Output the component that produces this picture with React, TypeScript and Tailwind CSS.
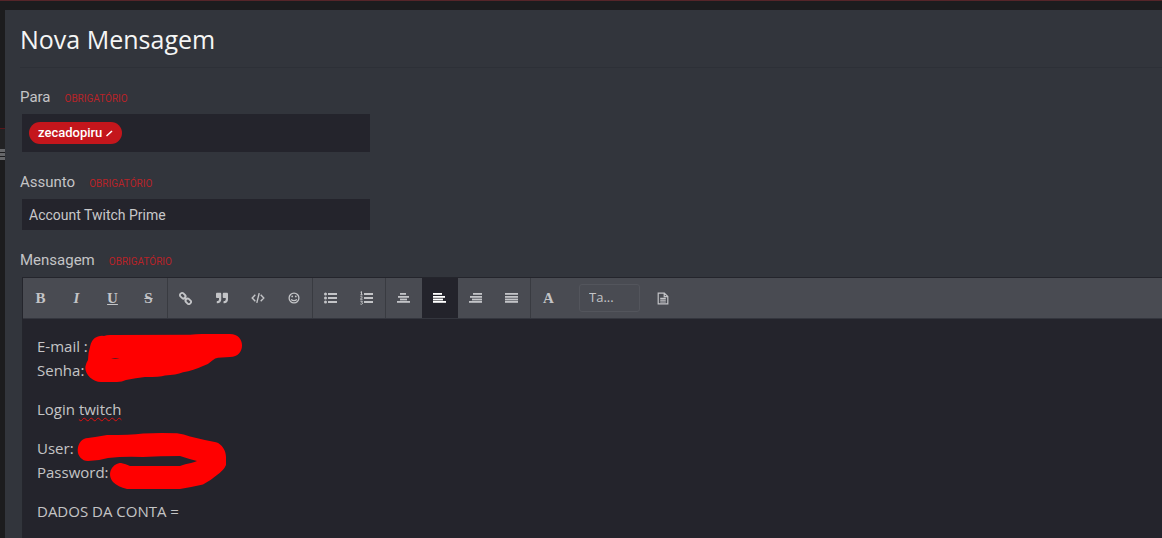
import { clsx } from "clsx"
import { useState } from "react"
import type { ReactNode } from "react"
import { FaQuoteRight } from "react-icons/fa"

type Tool = {
  id: string
  label: string
  icon: ReactNode
}

function Letter({ className, children }: { className?: string; children: ReactNode }) {
  return (
    <span className={clsx("font-['Liberation_Serif',serif] text-[15px] leading-5 font-bold", className)}>
      {children}
    </span>
  )
}

// Each row is [x, width], drawn from top to bottom
function Rows({ rows }: { rows: number[][] }) {
  return (
    <svg width="13" height="12" viewBox="0 0 13 12" fill="currentColor" aria-hidden="true">
      {rows.map(([x, width], index) => (
        <rect key={index} x={x} y={[1, 4, 6.6, 9][index]} width={width} height="1.800" />
      ))}
    </svg>
  )
}

function BulletList() {
  return (
    <svg width="13" height="12" viewBox="0 0 13 12" fill="currentColor" aria-hidden="true">
      {[1, 5, 9].map((y) => (
        <g key={y}>
          <circle cx="1.5" cy={y + 1} r="1.5" />
          <rect x="4" y={y} width="9" height="2" />
        </g>
      ))}
    </svg>
  )
}

function NumberList() {
  return (
    <svg width="13" height="14" viewBox="0 0 13 14" fill="currentColor" aria-hidden="true">
      {[2, 6, 10].map((y) => (
        <rect key={y} x="4" y={y} width="9" height="2" />
      ))}
      <path
        d="M0.5 1.2 1.5.6V3.8M.4 3.8h2.2M.4 5.8c.8-.8 2-.4 1.8.4S.5 7.5.4 8.2h2.2M.4 10.2h2L1.5 11.3c1.6.1 1.3 2-.1 2-.5 0-.8-.1-1.1-.4"
        fill="none"
        stroke="currentColor"
        strokeWidth="1"
      />
    </svg>
  )
}

function LinkIcon() {
  return (
    <svg width="13" height="13" viewBox="0 0 13 13" fill="none" stroke="currentColor" strokeWidth="1.800" aria-hidden="true">
      <g transform="rotate(45 6.5 6.5)">
        <rect x="-.3" y="4.400" width="6" height="4.200" rx="1.700" />
        <rect x="7.300" y="4.400" width="6" height="4.200" rx="1.700" />
        <path d="M4.300 6.500H8.700" />
      </g>
    </svg>
  )
}

function CodeIcon() {
  return (
    <svg width="14" height="12" viewBox="0 0 14 12" fill="none" stroke="currentColor" strokeWidth="1.400" aria-hidden="true">
      <path d="M4.300 2.700 1.200 6 4.300 9.300M9.700 2.700 12.800 6 9.700 9.300M8.200 1.200 5.800 10.800" />
    </svg>
  )
}

function SmileIcon() {
  return (
    <svg width="12" height="12" viewBox="0 0 12 12" fill="none" stroke="currentColor" strokeWidth="1.300" aria-hidden="true">
      <circle cx="6" cy="6" r="4.900" />
      <path d="M3.300 7.200C4.200 9.200 7.800 9.200 8.700 7.200" />
      <circle cx="4.200" cy="4.400" r=".9" fill="currentColor" stroke="none" />
      <circle cx="7.800" cy="4.400" r=".9" fill="currentColor" stroke="none" />
    </svg>
  )
}

function FileIcon() {
  return (
    <svg width="12" height="13" viewBox="0 0 12 13" fill="none" stroke="currentColor" strokeWidth="1.200" aria-hidden="true">
      <path d="M1.200 1.100H7.300L10.800 4.600V11.900H1.200ZM7.200 1.100V4.700H10.800M3.200 6.400H8.800M3.200 8.200H8.800M3.200 10H8.800" />
    </svg>
  )
}

const groups: Tool[][] = [
  [
    { id: "bold", label: "Negrito", icon: <Letter>B</Letter> },
    { id: "italic", label: "Itálico", icon: <Letter className="italic">I</Letter> },
    { id: "underline", label: "Sublinhado", icon: <Letter className="underline">U</Letter> },
    { id: "strike", label: "Tachado", icon: <Letter className="px-px line-through">S</Letter> },
  ],
  [
    { id: "link", label: "Link", icon: <LinkIcon /> },
    { id: "quote", label: "Citação", icon: <FaQuoteRight size={12} /> },
    { id: "code", label: "Código", icon: <CodeIcon /> },
    { id: "emoji", label: "Emoticon", icon: <SmileIcon /> },
  ],
  [
    { id: "bullets", label: "Lista", icon: <BulletList /> },
    { id: "numbers", label: "Lista numerada", icon: <NumberList /> },
  ],
  [
    { id: "center", label: "Centralizar", icon: <Rows rows={[[3, 6], [1, 11], [3, 7], [0, 13]]} /> },
    { id: "left", label: "Alinhar à esquerda", icon: <Rows rows={[[0, 9], [0, 12], [0, 10], [0, 13]]} /> },
    { id: "right", label: "Alinhar à direita", icon: <Rows rows={[[4, 9], [1, 12], [3, 10], [0, 13]]} /> },
    { id: "justify", label: "Justificar", icon: <Rows rows={[[0, 13], [0, 13], [0, 13], [0, 13]]} /> },
  ],
]

function ToolButton({ tool, active, onClick }: { tool: Tool; active?: boolean; onClick?: () => void }) {
  return (
    <button
      type="button"
      aria-label={tool.label}
      aria-pressed={active}
      onClick={onClick}
      className={clsx(
        "flex h-10 w-9 items-center justify-center pr-px",
        active ? "bg-[#23232b] text-white" : "text-[#c3c4c7]",
      )}
    >
      {tool.icon}
    </button>
  )
}

function FieldLabel({ id, htmlFor, children }: { id?: string; htmlFor?: string; children: ReactNode }) {
  return (
    <label id={id} htmlFor={htmlFor} className="flex items-baseline gap-3.5 text-[15px] leading-5 text-[#c4c4c6]">
      {children}
      <span className="text-[10px] text-[#b82328] uppercase">Obrigatório</span>
    </label>
  )
}

function Scribbles() {
  return (
    <svg
      className="pointer-events-none absolute top-0 left-0"
      width="240"
      height="219"
      viewBox="23 319 240 219"
      fill="#ff0000"
      aria-hidden="true"
    >
      <path d="M90 347C91 342 93 338 98 336.500Q101 335.500 104 336Q107 334.700 112 335L190 334.700Q196 334 202 334H230C246 334 246 357 230 357L218 357.700Q215 358 213 360Q209 364 203 366C197 369 190 371 183 372.300Q176 375 165 375.500Q160 377 145 377Q136 378 126 380Q122 382 117 382H101C93 382 85 375 85.300 367Q86 363 88 360Q88 353 90 347Z" />
      <path d="M111 358.800Q115 357 119.500 358.800Z" fill="#24242c" />
      <path d="M77.700 450C78 443 82 438 88 438Q96 437 107 435Q130 435 143 433.500Q160 432.500 177 433.300Q184 434 190 436.500Q204 440 216 442.300C222 444 226 451 226 457V465Q224 470 217 475Q210 481 203 484.500Q192 487 180 489H127Q118 487 113 482C106 473 113 463 121 463Q126 464 130 466H180Q185 464 191 463Q195 462 197 461Q189 459 180 456Q160 456 143 457Q125 456 108 458Q98 461 88 461C82 461 77.500 456 77.700 450Z" />
    </svg>
  )
}

export default function App() {
  const [subject, setSubject] = useState("Account Twitch Prime")
  const [align, setAlign] = useState("left")

  return (
    <div className="flex min-h-screen flex-col border-t border-[#552529] bg-[#1c1c1e] pt-[9px] font-[Roboto,sans-serif]">
      <div className="flex grow">
        <div className="w-[5px] shrink-0 pt-[118px]">
          <div className="h-[21px] border-t border-[#5a171b] bg-[#222224]" />
          <div className="flex flex-col gap-px">
            <div className="h-[3px] bg-[#66676a]" />
            <div className="h-[3px] bg-[#66676a]" />
            <div className="h-[3px] bg-[#66676a]" />
          </div>
        </div>

        <main className="flex min-w-0 grow flex-col bg-[#32353c] pl-[15px]">
          <h1 className="border-b border-[#2d3037] pt-[11px] pb-2.5 font-['Open_Sans',sans-serif] text-[25px] leading-9 text-[#f5f5f5]">
            Nova Mensagem
          </h1>

          <form className="flex grow flex-col pt-[19px]" onSubmit={(event) => event.preventDefault()}>
            <FieldLabel htmlFor="to">Para</FieldLabel>
            <div className="mt-[5px] ml-0.5 flex h-[38px] w-[348px] max-w-full items-center bg-[#24242c] px-[7px]">
              <span className="flex h-[22px] shrink-0 items-center gap-1 rounded-full bg-[#c4161c] px-[9px] text-[13px] font-medium text-white">
                zecadopiru
                <button type="button" aria-label="Remover zecadopiru">
                  <svg width="7" height="7" viewBox="0 0 7 7" stroke="currentColor" strokeWidth="1.500">
                    <path d="M.5 6 6 1" />
                  </svg>
                </button>
              </span>
              <input id="to" type="text" className="min-w-0 grow bg-transparent px-2 text-sm text-[#c4c4c6] outline-none" />
            </div>

            <div className="pt-5">
              <FieldLabel htmlFor="subject">Assunto</FieldLabel>
              <input
                id="subject"
                type="text"
                value={subject}
                onChange={(event) => setSubject(event.target.value)}
                className="mt-[5px] ml-0.5 block h-[31px] w-[348px] max-w-full bg-[#24242c] px-[7px] text-sm text-[#c8c8ca] outline-none"
              />
            </div>

            <div className="flex grow flex-col pt-5">
              <FieldLabel id="message-label">Mensagem</FieldLabel>

              <div className="mt-[5px] ml-0.5 flex grow flex-col border-t border-l border-[#24252c]">
                <div role="toolbar" className="flex border-b border-[#34363e] bg-[#494b52]">
                  {groups.map((group) => (
                    <div key={group[0].id} className="flex border-r border-[#393b41]">
                      {group.map((tool) => (
                        <ToolButton
                          key={tool.id}
                          tool={tool}
                          active={tool.id === align}
                          onClick={group === groups[3] ? () => setAlign(tool.id) : undefined}
                        />
                      ))}
                    </div>
                  ))}
                  <div className="flex items-center gap-3">
                    <ToolButton tool={{ id: "color", label: "Cor do texto", icon: <Letter>A</Letter> }} />
                    <select
                      aria-label="Tamanho"
                      className="h-7 w-[61px] appearance-none rounded-[3px] border border-[#53555c] bg-transparent px-[9px] font-['Open_Sans',sans-serif] text-[13px] text-[#c3c4c7]"
                    >
                      <option>Ta...</option>
                    </select>
                  </div>
                  <div className="pl-[5px]">
                    <ToolButton tool={{ id: "source", label: "Código-fonte", icon: <FileIcon /> }} />
                  </div>
                </div>

                <div className="relative grow bg-[#24242c]">
                  <div
                    role="textbox"
                    aria-multiline="true"
                    aria-labelledby="message-label"
                    contentEditable
                    suppressContentEditableWarning
                    spellCheck={false}
                    className="flex flex-col gap-[15px] px-[14px] pt-[15px] pb-3.5 font-['Open_Sans',sans-serif] text-[15px] leading-6 text-[#c4c4c6] outline-none"
                  >
                    <p>
                      E-mail :
                      <br />
                      Senha:
                    </p>
                    <p>
                      Login{" "}
                      <span className="underline decoration-[#e01010] decoration-wavy decoration-1 underline-offset-2">
                        twitch
                      </span>
                    </p>
                    <p>
                      User:
                      <br />
                      Password:
                    </p>
                    <p>DADOS DA CONTA =</p>
                  </div>
                  <Scribbles />
                </div>
              </div>
            </div>
          </form>
        </main>
      </div>
    </div>
  )
}
